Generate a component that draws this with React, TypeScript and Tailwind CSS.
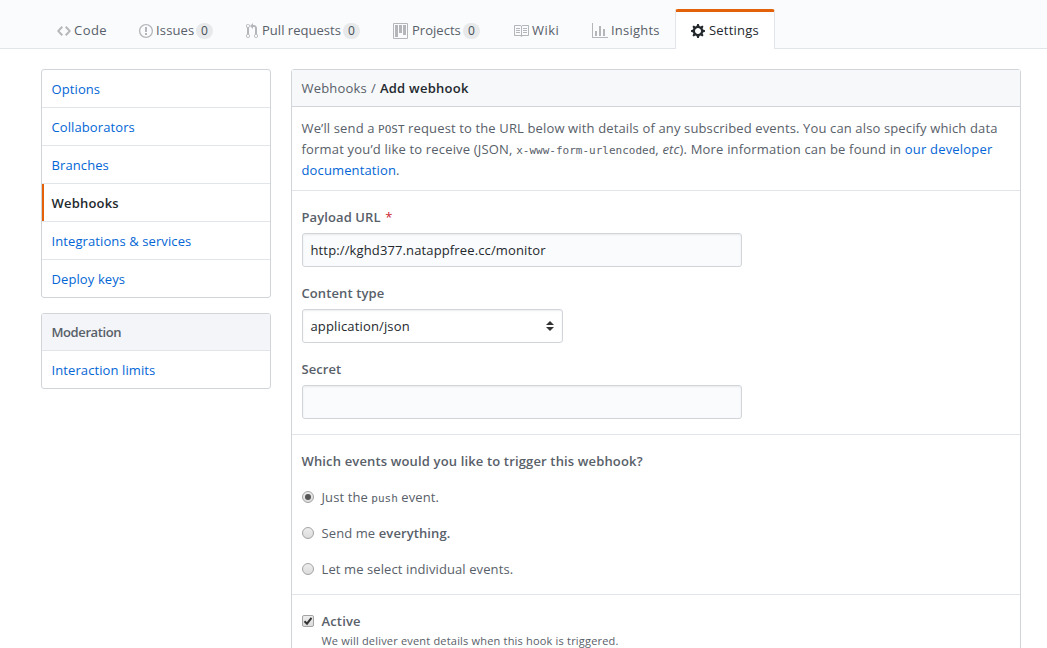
import React from "react";

const ICONS = {
  code: "M9.5 3L8 4.5 11.5 8 8 11.5 9.5 13 14 8 9.5 3zm-5 0L0 8l4.5 5L6 11.5 2.5 8 6 4.5 4.5 3z",
  issue: "M7 2.3c3.14 0 5.7 2.56 5.7 5.7s-2.56 5.7-5.7 5.7A5.71 5.71 0 0 1 1.3 8c0-3.14 2.56-5.7 5.7-5.7zM7 1C3.14 1 0 4.14 0 8s3.14 7 7 7 7-3.14 7-7-3.14-7-7-7zm1 3H6v5h2V4zm0 6H6v2h2v-2z",
  pull: "M11 11.28V5c-.03-.78-.34-1.47-.94-2.06C9.46 2.35 8.78 2.03 8 2H7V0L4 3l3 3V4h1c.27.02.48.11.69.31.21.2.3.42.31.69v6.28A1.993 1.993 0 0 0 10 15a1.993 1.993 0 0 0 1-3.72zm-1 2.92c-.66 0-1.2-.55-1.2-1.2 0-.65.55-1.2 1.2-1.2.65 0 1.2.55 1.2 1.2 0 .65-.55 1.2-1.2 1.2zM4 3c0-1.11-.89-2-2-2a1.993 1.993 0 0 0-1 3.72v6.56A1.993 1.993 0 0 0 2 15a1.993 1.993 0 0 0 1-3.72V4.72c.59-.34 1-.98 1-1.72zm-.8 10c0 .66-.55 1.2-1.2 1.2-.65 0-1.2-.55-1.2-1.2 0-.65.55-1.2 1.2-1.2.65 0 1.2.55 1.2 1.2zM2 4.2C1.34 4.2.8 3.65.8 3c0-.65.55-1.2 1.2-1.2.65 0 1.2.55 1.2 1.2 0 .65-.55 1.2-1.2 1.2z",
  project: "M10 12h3V2h-3v10zm-4-2h3V2H6v8zm-4 4h3V2H2v12zm-1 1h13V1H1v14zM14 0H1a1 1 0 0 0-1 1v14a1 1 0 0 0 1 1h13a1 1 0 0 0 1-1V1a1 1 0 0 0-1-1z",
  book: "M3 5h4v1H3V5zm0 3h4V7H3v1zm0 2h4V9H3v1zm11-5h-4v1h4V5zm0 2h-4v1h4V7zm0 2h-4v1h4V9zm2-6v9c0 .55-.45 1-1 1H9.5l-1 1-1-1H2c-.55 0-1-.45-1-1V3c0-.55.45-1 1-1h5.5l1 1 1-1H15c.55 0 1 .45 1 1zm-8 .5L7.5 3H2v9h6V3.5zm7-.5H9.5l-.5.5V12h6V3z",
  graph: "M16 14v1H0V0h1v14h15zM5 13H3V8h2v5zm4 0H7V3h2v10zm4 0h-2V6h2v7z",
  gear: "M14 8.77v-1.6l-1.94-.64-.45-1.09.88-1.84-1.13-1.13-1.81.91-1.09-.45-.69-1.92h-1.6l-.63 1.94-1.11.45-1.84-.88-1.13 1.13.91 1.81-.45 1.09L0 7.23v1.59l1.94.64.45 1.09-.88 1.84 1.13 1.13 1.81-.91 1.09.45.69 1.92h1.59l.63-1.94 1.11-.45 1.84.88 1.13-1.13-.92-1.81.47-1.09L14 8.75v.02zM7 11c-1.66 0-3-1.34-3-3s1.34-3 3-3 3 1.34 3 3-1.34 3-3 3z",
};

function Octicon({ name, width, className = "" }: { name: keyof typeof ICONS; width: number; className?: string }) {
  return (
    <svg viewBox={`0 0 ${width} 16`} width={width} height={16} fill="currentColor" className={`shrink-0 ${className}`}>
      <path fillRule="evenodd" d={ICONS[name]} />
    </svg>
  );
}

type Tab = { label: string; icon: keyof typeof ICONS; iconWidth: number; width: string; gap: string; text: string; count?: number };

const TABS: Tab[] = [
  { label: "Code", icon: "code", iconWidth: 14, width: "w-[82px]", gap: "gap-[3px]", text: "w-[35px] tracking-[0.45px]" },
  { label: "Issues", icon: "issue", iconWidth: 14, width: "w-[107px]", gap: "gap-[3px]", text: "w-[38px]", count: 0 },
  { label: "Pull requests", icon: "pull", iconWidth: 12, width: "w-[147px]", gap: "gap-[4px]", text: "w-[78px] tracking-[0.02px]", count: 0 },
  { label: "Projects", icon: "project", iconWidth: 15, width: "w-[120px]", gap: "gap-[4px]", text: "w-[48px] tracking-[0.02px]", count: 0 },
  { label: "Wiki", icon: "book", iconWidth: 16, width: "w-[79px]", gap: "gap-[3px]", text: "w-[28px] tracking-[0.5px]" },
  { label: "Insights", icon: "graph", iconWidth: 16, width: "w-[83px]", gap: "gap-[3px]", text: "w-[50px] tracking-[0.22px]" },
];

function TabBar() {
  return (
    <nav className="flex h-[49px] items-end border-b border-[#e1e4e8] bg-[#fafbfc] pl-[57px]">
      {TABS.map((t) => (
        <a key={t.label} className={`flex h-[35px] shrink-0 items-center ${t.width} ${t.gap}`}>
          <Octicon name={t.icon} width={t.iconWidth} className="text-[#b4b7ba]" />
          <span className={`whitespace-nowrap ${t.text}`}>{t.label}</span>
          {t.count !== undefined && (
            <span className="-ml-px flex h-4 w-[17px] items-center justify-center rounded-full bg-[#e8e9eb] text-[12px] font-medium tracking-normal text-[#444d56]">
              {t.count}
            </span>
          )}
        </a>
      ))}
      <a className="-mb-px flex h-[40px] w-[100px] items-center gap-1 rounded-t-[3px] border border-t-[3px] border-b-0 border-[#e1e4e8] border-t-[#e36209] bg-white pl-[15px] text-[#24292e]">
        <Octicon name="gear" width={14} className="mt-px" />
        <span className="tracking-[0.2px] whitespace-nowrap">Settings</span>
      </a>
    </nav>
  );
}

const MENU = ["Options", "Collaborators", "Branches", "Webhooks", "Integrations & services", "Deploy keys"];

function Sidebar() {
  return (
    <aside className="flex w-[230px] shrink-0 flex-col gap-[15px] tracking-[0.1px]">
      <div className="overflow-hidden rounded-[3px] border border-[#d1d5da]">
        {MENU.map((item) => (
          <a
            key={item}
            className={
              item === "Webhooks"
                ? "flex h-[38px] border-b border-[#e1e4e8] font-semibold tracking-[0.2px] text-[#24292e]"
                : "flex h-[38px] border-b border-[#e1e4e8] pl-[9.5px] text-[#0366d6] last:h-[37px] last:border-b-0"
            }
          >
            {item === "Webhooks" && <span className="mr-[7.5px] h-full w-[2px] bg-[#e36209]" />}
            <span className="leading-[39px]">{item}</span>
          </a>
        ))}
      </div>
      <div className="overflow-hidden rounded-[3px] border border-[#d1d5da]">
        <div className="h-[37px] border-b border-[#e1e4e8] bg-[#f3f5f8] pl-[9.5px] leading-[36px] font-semibold tracking-[-0.4px]">Moderation</div>
        <a className="block h-[37px] pl-[9.5px] leading-[39px] text-[#0366d6]">Interaction limits</a>
      </div>
    </aside>
  );
}

function Mono({ children }: { children: React.ReactNode }) {
  return <code className="font-['DejaVu_Sans_Mono',monospace] text-[11px] leading-none tracking-normal">{children}</code>;
}

function Radio({ checked = false }: { checked?: boolean }) {
  return (
    <span className="flex h-3 w-3 shrink-0 items-center justify-center rounded-full border border-[#a3a3a3] bg-linear-to-b from-[#ededed] to-[#dcdcdc]">
      {checked && <span className="h-1.5 w-1.5 rounded-full bg-[#555]" />}
    </span>
  );
}

function RadioRow({ checked, children }: { checked?: boolean; children: React.ReactNode }) {
  return (
    <label className="flex h-[21px] items-center gap-[7.5px] tracking-[0.1px]">
      <Radio checked={checked} />
      <span className="pt-[2px] whitespace-pre">{children}</span>
    </label>
  );
}

const FIELD = "flex h-[34px] items-center rounded-[3px] border border-[#d1d5da] pt-[2px] pl-[7.5px] text-[#24292e] shadow-[inset_0_1px_2px_rgba(27,31,35,0.075)]";

function WebhookForm() {
  return (
    <main className="h-[620px] w-[730px] shrink-0 rounded-[3px] border border-[#d1d5da]">
      <header className="flex h-[37px] items-center gap-1 border-b border-[#d1d5da] bg-[#f6f8fa] pt-[2px] pl-[9.5px]">
        <span className="tracking-[0.2px]">Webhooks</span>
        <span>/</span>
        <span className="font-semibold tracking-[0.25px] text-[#24292e]">Add webhook</span>
      </header>
      <p className="h-[84px] border-b border-[#e1e4e8] pt-[11px] pl-[9.5px] leading-[21px] tracking-[0.135px] whitespace-nowrap">
        We’ll send a <Mono>POST</Mono> request to the URL below with details of any subscribed events. You can also specify which data
        <br />
        <span className="tracking-[0.18px]">
          format you’d like to receive (JSON, <Mono>x-www-form-urlencoded</Mono>, <em>etc</em>). More information can be found in{" "}
          <a className="text-[#0366d6]">our developer</a>
        </span>
        <br />
        <a className="text-[#0366d6]">documentation</a>.
      </p>
      <section className="h-[244px] border-b border-[#e1e4e8] pt-[15px] pl-[10px]">
        <div className="h-[76px]">
          <div className="-ml-[0.5px] h-[27px] pt-px leading-[21px] font-semibold tracking-[0.1px]">
            Payload URL <span className="ml-px font-normal text-[#cb2431]">*</span>
          </div>
          <div className={`w-[440px] bg-[#fafbfc] tracking-[0.13px] ${FIELD}`}>http://kghd377.natappfree.cc/monitor</div>
        </div>
        <div className="h-[76px]">
          <div className="-ml-[0.5px] h-[27px] pt-px leading-[21px] font-semibold tracking-[0.1px]">Content type</div>
          <div className={`w-[261px] justify-between bg-white pr-2 ${FIELD}`}>
            application/json
            <svg width="8" height="10" viewBox="0 0 8 10" fill="#333" className="mb-0.5">
              <path d="M0 4L4 0l4 4zM0 6h8l-4 4z" />
            </svg>
          </div>
        </div>
        <div className="-ml-[0.5px] h-[27px] pt-px leading-[21px] font-semibold tracking-[0.05px]">Secret</div>
        <div className={`w-[440px] bg-[#fafbfc] ${FIELD}`} />
      </section>
      <section className="flex h-[160px] flex-col gap-[15px] border-b border-[#e1e4e8] pt-[15px] pl-[10px]">
        <div className="-ml-[0.5px] h-[21px] pt-px leading-[21px] font-semibold">Which events would you like to trigger this webhook?</div>
        <RadioRow checked>
          Just the <Mono>push</Mono> event.
        </RadioRow>
        <RadioRow>
          Send me <b className="font-semibold">everything.</b>
        </RadioRow>
        <RadioRow>Let me select individual events.</RadioRow>
      </section>
      <section className="pt-[15px] pl-[10px]">
        <label className="flex h-[21px] items-center gap-[7.5px] font-semibold">
          <span className="flex h-3 w-3 items-center justify-center rounded-[2px] border border-[#a3a3a3] bg-linear-to-b from-[#ededed] to-[#dcdcdc]">
            <svg width="10" height="10" viewBox="0 0 10 10" fill="none" stroke="#333" strokeWidth="2">
              <path d="M1.5 5.2L4 7.7 8.5 1.8" />
            </svg>
          </span>
          <span className="pt-[2px]">Active</span>
        </label>
        <p className="pt-px pl-[19.5px] text-[11px] leading-[18px] tracking-[0.19px]">We will deliver event details when this hook is triggered.</p>
      </section>
    </main>
  );
}

export default function App() {
  return (
    <div className="h-[648px] w-[1047px] overflow-hidden bg-white font-['Open_Sans',sans-serif] text-[13px] tracking-[0.15px] text-[#586069]">
      <TabBar />
      <div className="flex gap-5 pt-5 pl-[41px]">
        <Sidebar />
        <WebhookForm />
      </div>
    </div>
  );
}
